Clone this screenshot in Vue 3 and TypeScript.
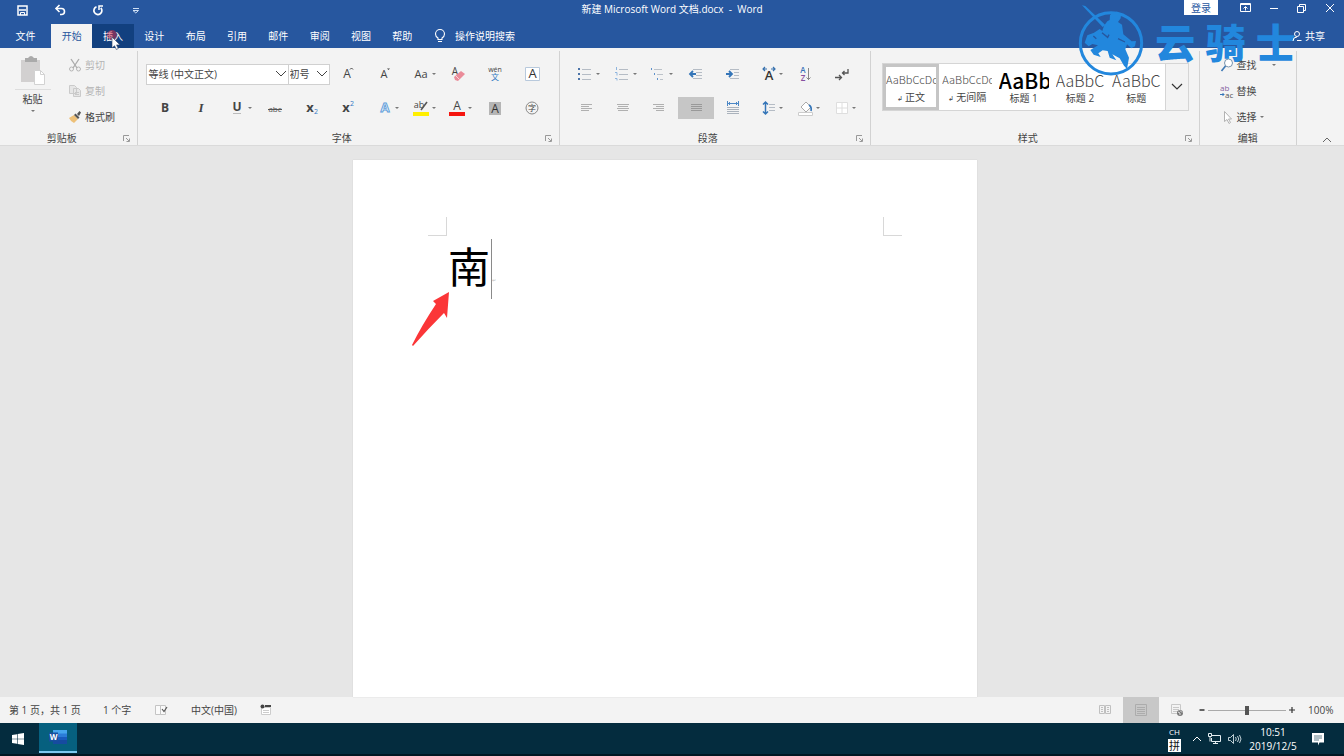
<script setup lang="ts">
import { ref } from 'vue'

interface Tool {
  name: string
  svg: string
  menu?: boolean
  active?: boolean
}

const tabs = ['开始', '插入', '设计', '布局', '引用', '邮件', '审阅', '视图', '帮助']
const activeTab = ref('开始')
const hoverTab = '插入'
const zoom = ref(50)

const lines = (rows: [number, number, number][], color: string) =>
  rows.map(([x1, x2, y]) => `<path d="M${x1} ${y}H${x2}" stroke="${color}"/>`).join('')

const letter = (t: string, x: number, y: number, size: number, fill: string, extra = '') =>
  `<text x="${x}" y="${y}" font-size="${size}" fill="${fill}" text-anchor="middle" ${extra}>${t}</text>`

const quick: Tool[] = [
  { name: '保存', svg: '<path d="M6 6h9v9H6z" fill="#27579f" stroke="#fff" stroke-width="1.500"/><path d="M7 10h7" stroke="#fff" stroke-width="1.500"/><path d="M8.500 15v-2.500h4V15" stroke="#fff" fill="none"/>' },
  { name: '撤消', svg: '<path d="M6.500 8.500h5a3 3 0 0 1 0 6H10" fill="none" stroke="#fff" stroke-width="1.600"/><path d="M9.500 5 6 8.500 9.500 12" fill="none" stroke="#fff" stroke-width="1.600"/>' },
  { name: '重复', svg: '<path d="M8.500 6.800a4 4 0 1 0 4.300 1" fill="none" stroke="#fff" stroke-width="1.700"/><path d="M15 6h-4v4" fill="none" stroke="#fff" stroke-width="1.500"/>' },
  { name: '自定义快速访问工具栏', svg: '<path d="M7 8.500h6" stroke="#cfe0f5"/><path d="M7 10.500h5.500L9.800 13z" fill="none" stroke="#cfe0f5"/>' },
]

const windowButtons: Tool[] = [
  { name: '功能区显示选项', svg: '<path d="M4.500 5.500h10v8h-10z" fill="none" stroke="#fff"/><path d="M5 6.500h9" stroke="#fff"/><path d="M9.500 12.500V9M7.500 10.500l2-2 2 2" fill="none" stroke="#fff"/>' },
  { name: '最小化', svg: '<path d="M6 10.500h8" stroke="#fff"/>' },
  { name: '向下还原', svg: '<path d="M5.500 8.500h6v6h-6z" fill="none" stroke="#fff"/><path d="M7.500 8V6.500h6v6H12" fill="none" stroke="#fff"/>' },
  { name: '关闭', svg: '<path d="m6 6 8 8M14 6l-8 8" stroke="#fff" fill="none"/>' },
]

const fontTop: Tool[] = [
  { name: '增大字号', svg: letter('A', 9, 14, 12, '#444') + '<path d="m12 5.500 1.500-1.500L15 5.500" fill="none" stroke="#444"/>' },
  { name: '减小字号', svg: letter('A', 9, 14, 11, '#444') + '<path d="M12 4.500h3l-1.500 1.500z" fill="#444"/>' },
  { name: '更改大小写', svg: letter('Aa', 9, 14, 11, '#444'), menu: true },
  { name: '清除所有格式', svg: letter('A', 7, 11, 10, '#444') + '<path d="m6 13 7-6 4 3-7 7-3-1z" fill="#ea8b99"/><path d="m8 12 3.500 3.500" stroke="#f9d5da"/>' },
  { name: '拼音指南', svg: letter('wén', 10, 8, 7, '#444') + letter('文', 10, 16, 8, '#2f78c4') },
  { name: '字符边框', svg: '<path d="M3.500 3.500h14v13h-14z" fill="#fff" stroke="#b8c9dc"/>' + letter('A', 10.5, 14, 13, '#333') },
]

const fontBottom: Tool[] = [
  { name: '加粗', svg: letter('B', 10, 14, 12, '#444', 'font-weight="700"') },
  { name: '倾斜', svg: letter('I', 10, 14, 13, '#444', 'font-weight="700" font-style="italic" font-family="Liberation Serif, serif"') },
  { name: '下划线', svg: letter('U', 9, 13, 12, '#444', 'font-weight="700"') + '<path d="M5 15.500h8" stroke="#bbb"/>', menu: true },
  { name: '删除线', svg: letter('abc', 10, 14, 8, '#555') + '<path d="M3 11.500h14" stroke="#555"/>' },
  { name: '下标', svg: letter('x', 8, 14, 13, '#444', 'font-weight="700"') + letter('2', 14, 16, 7, '#2f78c4') },
  { name: '上标', svg: letter('x', 8, 14, 13, '#444', 'font-weight="700"') + letter('2', 14, 8, 7, '#2f78c4') },
  { name: '文本效果和版式', svg: letter('A', 10, 14, 13, '#eef5fc', 'stroke="#5b9bd9" stroke-width=".9" font-weight="700"'), menu: true },
  { name: '突出显示', svg: letter('ab', 7, 10, 9, '#444') + '<path d="m15 4-6 8" stroke="#555" stroke-width="1.600"/><path d="M1 14h16v4H1z" fill="#ffef00"/>', menu: true },
  { name: '字体颜色', svg: letter('A', 9, 12, 12, '#444') + '<path d="M1 14h16v4H1z" fill="#f5150f"/>', menu: true },
  { name: '字符底纹', svg: '<path d="M4 4h12v13H4z" fill="#b5b5b5"/>' + letter('A', 10, 15, 12, '#333') },
  { name: '带圈字符', svg: '<circle cx="10" cy="10" r="6" fill="none" stroke="#888"/>' + letter('字', 10, 13, 8, '#444') },
]

const paraTop: Tool[] = [
  { name: '项目符号', svg: '<path d="M2 4h2v2H2zM2 9h2v2H2zM2 14h2v2H2z" fill="#4b73a8"/>' + lines([[6, 15, 5.5], [6, 15, 10.5], [6, 15, 15.5]], '#b5bcc5'), menu: true },
  { name: '编号', svg: '<path d="M3.500 3v3M2 8.500h2v3M2 14.500h2v2" fill="none" stroke="#8eb5df"/>' + lines([[6, 15, 5.5], [6, 15, 10.5], [6, 15, 15.5]], '#b5bcc5'), menu: true },
  { name: '多级列表', svg: '<path d="M2.500 4v2M5.500 9v2M8.500 14v2" stroke="#5e92cc"/>' + lines([[5, 13, 5.5], [8, 14, 10.5], [11, 14, 15.5]], '#bcc2c9'), menu: true },
  { name: '减少缩进量', svg: lines([[7, 16, 5.5], [10, 16, 8.5], [10, 16, 11.5], [7, 16, 14.5]], '#b5bcc5') + '<path d="M4 10h6M7 7l-3 3 3 3" fill="none" stroke="#3475b8" stroke-width="1.800"/>' },
  { name: '增加缩进量', svg: lines([[7, 16, 5.5], [11, 16, 8.5], [11, 16, 11.5], [7, 16, 14.5]], '#b5bcc5') + '<path d="M3 10h6M6 7l3 3-3 3" fill="none" stroke="#3475b8" stroke-width="1.800"/>' },
  { name: '中文版式', svg: letter('A', 10, 16, 13, '#333', 'font-weight="600"') + '<path d="M4 5h4M6 3 4 5l2 2M12 5h4M14 3l2 2-2 2" fill="none" stroke="#3670ad" stroke-width="1.200"/>', menu: true },
  { name: '排序', svg: letter('A', 7, 9, 8, '#3671b8', 'font-weight="600"') + letter('Z', 7, 17, 8, '#8650a0', 'font-weight="600"') + '<path d="M12.500 4v12M10.500 13.500l2 2 2-2" fill="none" stroke="#888"/>' },
  { name: '显示编辑标记', svg: '<path d="M3 13.500h6M7 11l2.500 2.500L7 16M16 5v4h-5M12.500 7l-2 2 2 2" fill="none" stroke="#555" stroke-width="1.300"/>' },
]

const paraBottom: Tool[] = [
  { name: '左对齐', svg: lines([[5, 16, 6.5], [5, 13, 8.5], [5, 16, 10.5], [5, 13, 12.5]], '#b0b0b0') },
  { name: '居中', svg: lines([[4, 16, 6.5], [5, 15, 8.5], [4, 16, 10.5], [5, 15, 12.5]], '#b0b0b0') },
  { name: '右对齐', svg: lines([[4, 15, 6.5], [7, 15, 8.5], [4, 15, 10.5], [7, 15, 12.5]], '#b0b0b0') },
  { name: '两端对齐', svg: lines([[5, 16, 6.5], [5, 16, 8.5], [5, 16, 10.5], [5, 16, 12.5]], '#999'), active: true },
  { name: '分散对齐', svg: '<path d="M4.500 3v5M15.500 3v5M5 5.500h10M7 4 5.500 5.500 7 7M13 4l1.500 1.500L13 7" fill="none" stroke="#4b87c6"/>' + lines([[4, 16, 9.5], [4, 16, 11.5], [4, 16, 13.5], [4, 16, 15.5]], '#aab2bc') },
  { name: '行和段落间距', svg: '<path d="M6.500 4v12M4 6.500l2.500-2.500L9 6.500M4 13.500 6.500 16 9 13.500" fill="none" stroke="#3475b8" stroke-width="1.500"/>' + lines([[10, 16, 6.5], [10, 16, 9.5], [10, 16, 12.5]], '#b5bcc5'), menu: true },
  { name: '底纹', svg: '<path d="m5 9 5-5 5 5-5 5z" fill="#fff" stroke="#aaa"/><path d="M13 7q3 2 2 6" fill="none" stroke="#3475b8" stroke-width="1.600"/><path d="M2.500 14.500h14v3h-14z" fill="#fff" stroke="#ccc"/>', menu: true },
  { name: '边框', svg: '<path d="M4.500 4.500h11v11h-11z" fill="#fff" stroke="#dedede"/><path d="M10 5v10M5 10h10" stroke="#dedede"/>', menu: true },
]

const styles = [
  { sample: 'AaBbCcDc', name: '正文', kind: 'text', mark: true },
  { sample: 'AaBbCcDc', name: '无间隔', kind: 'text', mark: true },
  { sample: 'AaBb', name: '标题 1', kind: 'h1', mark: false },
  { sample: 'AaBbC', name: '标题 2', kind: 'h2', mark: false },
  { sample: 'AaBbC', name: '标题', kind: 'h2', mark: false },
]

const groups = [
  { key: 'font', label: '字体', tools: [...fontTop, ...fontBottom] },
  { key: 'para', label: '段落', tools: [...paraTop, ...paraBottom] },
]
</script>

<template>
  <div class="word">
    <header class="banner">
      <div class="titlebar">
        <div class="quick">
          <button v-for="q in quick" :key="q.name" :aria-label="q.name">
            <svg width="20" height="20" viewBox="0 0 20 20" v-html="q.svg"></svg>
          </button>
        </div>
        <h1>新建 Microsoft Word 文档.docx&nbsp; -&nbsp; Word</h1>
        <div class="window">
          <button class="login">登录</button>
          <button v-for="w in windowButtons" :key="w.name" class="win" :aria-label="w.name">
            <svg width="20" height="20" viewBox="0 0 20 20" v-html="w.svg"></svg>
          </button>
        </div>
      </div>
      <div class="tabrow">
        <nav class="tabs">
          <button>文件</button>
          <button
            v-for="t in tabs"
            :key="t"
            :class="{ on: t === activeTab, hover: t === hoverTab }"
            @click="activeTab = t"
          >
            {{ t }}
            <svg v-if="t === hoverTab" class="pointer" width="16" height="22" viewBox="0 0 16 22">
              <circle cx="6" cy="6" r="5" fill="#d82b45" opacity=".5" />
              <path d="M6 8v11l2.500-2.300 1.800 3.800 2-1-1.700-3.600H14z" fill="#fff" stroke="#2b3c60" stroke-width=".6" />
            </svg>
          </button>
        </nav>
        <button class="tell">
          <svg width="12" height="16" viewBox="0 0 12 16">
            <path d="M4 11.500V10Q1.500 8.500 1.500 6a4.500 4.500 0 0 1 9 0Q10.500 8.500 8 10v1.500zM4 13.500h4" fill="none" stroke="#fff" stroke-width="1.100" />
          </svg>
          <span>操作说明搜索</span>
        </button>
        <button class="share">
          <svg width="10" height="12" viewBox="0 0 10 12">
            <circle cx="5" cy="4" r="2.500" fill="none" stroke="#fff" />
            <path d="M1 11Q1 7 5 7M5 10.500h4.500" fill="none" stroke="#fff" />
          </svg>
          <span>共享</span>
        </button>
      </div>
    </header>

    <section class="ribbon">
      <div class="group clipboard">
        <div class="body clip">
          <button class="paste">
            <svg width="26" height="32" viewBox="0 0 26 32">
              <path d="M1 5h19v22H1z" fill="#d2d0d0" />
              <path d="M5 3h3q3-4 6 0h3v4H5z" fill="#aaa" />
              <path d="M14.500 15.500h6l4 4v10h-10z" fill="#fff" stroke="#d2d2d2" />
              <path d="M20.500 15.500v4h4" fill="none" stroke="#d2d2d2" />
            </svg>
            <span class="rule"></span>
            <span>粘贴</span>
            <i class="caret"></i>
          </button>
          <div class="stack">
            <button class="dim">
              <svg width="14" height="14" viewBox="0 0 14 14">
                <path d="m3 1 6 9M11 1 5 10" stroke="#aaa" stroke-width="1.300" fill="none" />
                <circle cx="3.500" cy="11" r="2" fill="none" stroke="#b5b5b5" />
                <circle cx="10.500" cy="11" r="2" fill="none" stroke="#b5b5b5" />
              </svg>剪切
            </button>
            <button class="dim">
              <svg width="14" height="14" viewBox="0 0 14 14">
                <path d="M1.500 1.500h5l2 2v6h-7zM5.500 4.500h5l2 2v6h-7z" fill="#e6e6e6" stroke="#cacaca" />
                <path d="M7 8.500h4M7 10.500h4" stroke="#c8c8c8" />
              </svg>复制
            </button>
            <button>
              <svg width="14" height="14" viewBox="0 0 14 14">
                <path d="m1 8 5-3 4 4-4 4q-3-1-5-5z" fill="#edc078" />
                <path d="m6 5 1.500-1.500 4 4L10 9zM9 4l2.500-3 1.500 1.500L11 6z" fill="#555" />
              </svg>格式刷
            </button>
          </div>
        </div>
        <footer>
          <span>剪贴板</span>
          <button class="launch" aria-label="剪贴板选项">
            <svg width="7" height="7" viewBox="0 0 7 7"><path d="M.5 6V.5H6M3 3l3 3M6.500 3.500v3h-3" fill="none" stroke="#999" /></svg>
          </button>
        </footer>
      </div>

      <div v-for="g in groups" :key="g.key" class="group" :class="g.key">
        <div class="body tools">
          <div v-if="g.key === 'font'" class="pick">
            <label class="combo">
              <select aria-label="字体"><option>等线 (中文正文)</option></select>
              <svg width="12" height="8" viewBox="0 0 12 8"><path d="m1 1 5 5 5-5" fill="none" stroke="#444" /></svg>
            </label>
            <label class="combo small">
              <select aria-label="字号"><option>初号</option></select>
              <svg width="12" height="8" viewBox="0 0 12 8"><path d="m1 1 5 5 5-5" fill="none" stroke="#444" /></svg>
            </label>
          </div>
          <button
            v-for="t in g.tools"
            :key="t.name"
            class="tool"
            :class="{ active: t.active }"
            :aria-label="t.name"
          >
            <svg width="20" height="20" viewBox="0 0 20 20" v-html="t.svg"></svg>
            <i v-if="t.menu" class="caret"></i>
          </button>
        </div>
        <footer>
          <span>{{ g.label }}</span>
          <button class="launch" aria-label="更多选项">
            <svg width="7" height="7" viewBox="0 0 7 7"><path d="M.5 6V.5H6M3 3l3 3M6.500 3.500v3h-3" fill="none" stroke="#999" /></svg>
          </button>
        </footer>
      </div>

      <div class="group style">
        <div class="body">
          <div class="gallery">
            <button v-for="(s, i) in styles" :key="s.name" class="card" :class="{ chosen: i === 0 }">
              <span class="sample" :class="s.kind">{{ s.sample }}</span>
              <span class="name"><small v-if="s.mark">↲</small>{{ s.name }}</span>
            </button>
            <button class="more" aria-label="其他样式">
              <svg width="12" height="8" viewBox="0 0 12 8"><path d="m1 1 5 5 5-5" fill="none" stroke="#333" stroke-width="1.200" /></svg>
            </button>
          </div>
        </div>
        <footer>
          <span>样式</span>
          <button class="launch" aria-label="样式选项">
            <svg width="7" height="7" viewBox="0 0 7 7"><path d="M.5 6V.5H6M3 3l3 3M6.500 3.500v3h-3" fill="none" stroke="#999" /></svg>
          </button>
        </footer>
      </div>

      <div class="group edit">
        <div class="body stack">
          <button>
            <svg width="14" height="14" viewBox="0 0 14 14">
              <circle cx="8.500" cy="5" r="4" fill="#fff" stroke="#7994ad" />
              <path d="m5.500 8-4 5" stroke="#3d78b4" stroke-width="1.600" />
            </svg>查找<i class="caret far"></i>
          </button>
          <button>
            <svg width="14" height="14" viewBox="0 0 14 14">
              <text x="0" y="7" font-size="8" fill="#8360a0">ab</text>
              <text x="5" y="14" font-size="8" fill="#555">ac</text>
              <path d="M0 10.500h4M2.500 9 4 10.500 2.500 12" fill="none" stroke="#3475b8" />
            </svg>替换
          </button>
          <button>
            <svg width="14" height="14" viewBox="0 0 14 14">
              <path d="M4.500 1.500v10l2.500-2 2 4 1.500-1-2-3.500h3z" fill="#fff" stroke="#aaa" stroke-width=".9" />
            </svg>选择<i class="caret"></i>
          </button>
        </div>
        <footer><span>编辑</span></footer>
      </div>

      <div class="fold">
        <button aria-label="折叠功能区">
          <svg width="10" height="6" viewBox="0 0 10 6"><path d="m1 5 4-4 4 4" fill="none" stroke="#666" /></svg>
        </button>
      </div>
    </section>

    <main class="desk">
      <article class="page">
        <div class="corners"><i class="corner"></i><i class="corner end"></i></div>
        <p class="line">南<span class="cursor"></span><small>↵</small></p>
        <svg class="arrow" width="40" height="56" viewBox="0 0 40 56">
          <path d="M38 1 22 10l3 3Q11 34 1 54l1 1Q17 38 33 22l3 5z" fill="#fb3638" />
        </svg>
      </article>
    </main>

    <footer class="status">
      <span class="pages">第 1 页，共 1 页</span>
      <span class="words">1 个字</span>
      <button aria-label="校对" class="proof">
        <svg width="14" height="12" viewBox="0 0 14 12">
          <path d="M1.500 1.500h5v9h-5zM6.500 1.500h5v9h-5z" fill="#fafafa" stroke="#c4c4c4" />
          <path d="m8 5 2 2.500L13 3" fill="none" stroke="#555" stroke-width="1.200" />
        </svg>
      </button>
      <span class="lang">中文(中国)</span>
      <button aria-label="宏录制">
        <svg width="12" height="12" viewBox="0 0 12 12">
          <path d="M1.500 3.500h9v7h-9z" fill="#fff" stroke="#ccc" />
          <path d="M3 6.500h6M3 8.500h6" stroke="#ccc" />
          <circle cx="2.500" cy="2.500" r="2" fill="#444" />
          <path d="M5 1h6v2H5z" fill="#444" />
        </svg>
      </button>
      <div class="views">
        <button aria-label="阅读视图">
          <svg width="12" height="12" viewBox="0 0 12 12"><path d="M.5 1.500h5v8h-5zM6.500 1.500h5v8h-5zM2 3.500h2M2 5.500h2M2 7.500h2M8 3.500h2M8 5.500h2M8 7.500h2" fill="none" stroke="#c0c0c0" /></svg>
        </button>
        <button class="on" aria-label="页面视图">
          <svg width="12" height="12" viewBox="0 0 12 12"><path d="M.5.5h11v11H.5zM2 3.500h8M2 5.500h8M2 7.500h8M2 9.500h8" fill="none" stroke="#acacac" /></svg>
        </button>
        <button aria-label="Web 版式视图">
          <svg width="12" height="12" viewBox="0 0 12 12">
            <path d="M.5.5h9v9h-9zM2 3.500h6M2 5.500h6M2 7.500h6" fill="none" stroke="#c8c8c8" />
            <circle cx="9" cy="9" r="3" fill="#777" /><path d="m7 8 2 1v2M9 6.500l2 2" stroke="#fff" fill="none" stroke-width=".8" />
          </svg>
        </button>
      </div>
      <div class="zoom">
        <button aria-label="缩小"><svg width="6" height="6" viewBox="0 0 6 6"><path d="M.5 3h5" stroke="#333" stroke-width="1.500" /></svg></button>
        <input v-model="zoom" type="range" min="0" max="100" aria-label="缩放" />
        <button aria-label="放大"><svg width="6" height="6" viewBox="0 0 6 6"><path d="M0 3h6M3 0v6" stroke="#333" stroke-width="1.200" /></svg></button>
      </div>
      <span class="percent">100%</span>
    </footer>

    <div class="taskbar">
      <button class="start" aria-label="开始菜单">
        <svg width="12" height="12" viewBox="0 0 12 12"><path d="m0 2 5-.8v4.500H0zM5.600 1.100 12 0v5.700H5.600zM0 6.300h5v4.500L0 10zM5.600 6.300H12V12l-6.400-1.100z" fill="#fff" /></svg>
      </button>
      <button class="app" aria-label="Word">
        <svg width="18" height="16" viewBox="0 0 18 16">
          <path d="M4 1h14v4H4z" fill="#45a5ee" /><path d="M4 4.500h14v4H4z" fill="#2b7cd8" />
          <path d="M4 8h14v3.500H4z" fill="#195bbd" /><path d="M4 11h14v4H4z" fill="#164ba0" />
          <path d="M0 3.500h9v9H0z" fill="#174f9f" />
          <text x="4.500" y="11" font-size="8" font-weight="700" fill="#fff" text-anchor="middle">W</text>
        </svg>
      </button>
      <div class="tray">
        <span class="ime"><span>CH</span><b>拼</b></span>
        <button aria-label="显示隐藏的图标"><svg width="10" height="6" viewBox="0 0 10 6"><path d="m1 5 4-4 4 4" fill="none" stroke="#fff" /></svg></button>
        <button aria-label="网络">
          <svg width="14" height="12" viewBox="0 0 14 12"><path d="M4 2.500h8.500v6h-9V5M5 10.500h5M7.500 8.500v2M.5.500h3v3h-3zM2 3.500v5" fill="none" stroke="#e5eef2" /></svg>
        </button>
        <button aria-label="音量">
          <svg width="14" height="12" viewBox="0 0 14 12"><path d="M.5 4.500h2l3-3v9l-3-3h-2zM7.500 4q1.500 2 0 4M9.500 3q2.500 3 0 6M11.500 2q3 4 0 8" fill="none" stroke="#d5e2e7" stroke-width=".9" /></svg>
        </button>
        <time><span>10:51</span><span>2019/12/5</span></time>
        <button class="note" aria-label="通知">
          <svg width="14" height="14" viewBox="0 0 14 14"><path d="M1 1h12v9.500H8.500L7 13.500V10.500H1z" fill="#fff" /><path d="M3 4h8M3 6h8M3 8h5" stroke="#527582" stroke-width=".9" /></svg>
        </button>
      </div>
    </div>

    <div class="brand">
      <svg width="74" height="80" viewBox="50 0 222 240">
        <circle cx="155" cy="130" r="92" fill="none" stroke="#2287dd" stroke-width="9" />
        <path d="m68 16 10 2 60 57-8 6z" fill="#2287dd" />
        <path d="M76 128 84 106 104 98 121 87 129 93 134 77 144 64 151 60 152 46 157 40 171 35 185 43 184 55 176 66 188 74 192 103 217 124 230 123 227 139 216 145 203 133 198 148 209 173 203 207 194 197 181 175 159 163 171 181 151 173 145 153 130 151 117 160 124 171 103 164 93 150 116 136 99 132 88 139z" fill="#2287dd" />
        <path d="m128 98 17 14 4-8M176 116l21 10M102 108l9 8" fill="none" stroke="#27579f" stroke-width="4" />
      </svg>
      <span>云</span><span>骑</span><span>士</span>
    </div>
  </div>
</template>

<style>
body {
  margin: 0;
}
</style>

<style scoped>
.word {
  position: relative;
  display: flex;
  flex-direction: column;
  min-height: 100vh;
  overflow: hidden;
  background: #e6e6e6;
  color: #444;
  font: 10px/14px "Open Sans", "Noto Sans CJK SC", sans-serif;
}
button {
  display: flex;
  align-items: center;
  justify-content: center;
  padding: 0;
  border: 0;
  background: none;
  color: inherit;
  font: inherit;
  white-space: nowrap;
}
svg {
  flex: none;
  display: block;
}
.banner {
  background: #27579f;
  color: #fff;
}
.titlebar {
  display: grid;
  grid-template-columns: 1fr auto 1fr;
  height: 24px;
}
.titlebar h1 {
  margin: 0;
  font-size: 10px;
  font-weight: 400;
  line-height: 18px;
  white-space: pre;
}
.quick {
  display: flex;
  padding-left: 3px;
}
.quick button {
  width: 38px;
  height: 20px;
}
.window {
  display: flex;
  justify-content: flex-end;
  align-items: flex-start;
}
.login {
  width: 34px;
  height: 15px;
  margin-right: 14px;
  background: #fff;
  color: #27579f;
}
.win {
  width: 28px;
  height: 15px;
}
.tabrow {
  display: flex;
  height: 24px;
}
.tabs {
  display: grid;
  grid-template-columns: 51px repeat(9, 1fr);
  width: 423px;
}
.tabs button {
  position: relative;
}
.tabs .on {
  background: #f3f3f3;
  color: #27579f;
}
.tabs .hover {
  background: #12407f;
}
.pointer {
  position: absolute;
  left: 14px;
  top: 5px;
}
.tell {
  gap: 9px;
  margin-left: 11px;
}
.share {
  position: relative;
  z-index: 2;
  gap: 3px;
  margin: 0 19px 0 auto;
}
.ribbon {
  display: flex;
  height: 98px;
  background: #f3f3f3;
  border-bottom: 1px solid #dadada;
  box-sizing: border-box;
}
.group {
  display: flex;
  flex-direction: column;
  box-sizing: border-box;
  min-width: 0;
  margin: 3px 0 0;
  border-right: 1px solid #d2d2d2;
}
.group footer {
  display: flex;
  align-items: center;
  height: 14px;
}
.group footer > span {
  flex: 1;
  text-align: center;
}
.launch {
  width: 14px;
  justify-content: flex-start;
}
.body {
  flex: 1;
}
.clipboard {
  flex: 138 1 0;
}
.font {
  flex: 422 1 0;
}
.para {
  flex: 311 1 0;
}
.style {
  flex: 329 1 0;
}
.edit {
  flex: 97 1 0;
}
.fold {
  flex: 47 1 0;
  display: flex;
  align-items: flex-end;
  justify-content: flex-end;
}
.fold button {
  margin: 0 12px 2px 0;
}
.clip {
  display: flex;
  gap: 19px;
  padding-left: 16px;
}
.paste {
  flex-direction: column;
  justify-content: flex-start;
  width: 33px;
  padding-top: 4px;
}
.rule {
  width: 36px;
  height: 1px;
  margin: 2px 0;
  background: #ddd;
}
.caret {
  width: 0;
  height: 0;
  border: 2px solid transparent;
  border-top-color: #777;
  border-bottom: 0;
}
.paste .caret {
  margin-top: 4px;
}
.stack {
  display: flex;
  flex-direction: column;
  align-items: flex-start;
  padding-top: 1px;
}
.stack button {
  height: 26px;
  gap: 3px;
}
.dim {
  color: #b3b3b3;
}
.edit .stack {
  padding-left: 20px;
}
.caret.far {
  margin-left: 12px;
}
.tools {
  display: grid;
  grid-template-rows: 34px 34px;
  padding: 6px 9px 0 8px;
}
.font .tools {
  grid-template-columns: repeat(11, 1fr);
}
.para .tools {
  grid-template-columns: repeat(8, 1fr);
}
.pick {
  grid-column: span 5;
  display: flex;
  align-items: center;
}
.combo {
  display: grid;
  flex: 141 1 0;
  align-items: center;
}
.combo.small {
  flex: 42 1 0;
  margin-left: -1px;
}
.combo select,
.combo svg {
  grid-area: 1 / 1;
}
.combo svg {
  justify-self: end;
  margin-right: 2px;
  pointer-events: none;
}
.combo select {
  appearance: none;
  width: 100%;
  height: 21px;
  padding: 0 1px;
  border: 1px solid #d0d0d0;
  border-radius: 0;
  background: #fff;
  color: #444;
  font: inherit;
}
.tool {
  display: grid;
  grid-template-columns: 1fr 20px 1fr;
  align-items: center;
}
.tool svg {
  grid-column: 2;
}
.tool.active {
  height: 22px;
  align-self: center;
  background: #c6c6c6;
}
.gallery {
  display: grid;
  grid-template-columns: repeat(5, 1fr) 23px;
  height: 48px;
  margin: 12px 10px 0 11px;
  box-sizing: border-box;
  border: 1px solid #d5d5d5;
  background: #fff;
}
.card {
  flex-direction: column;
  min-width: 0;
  padding: 0 3px;
}
.card.chosen {
  padding: 0;
  border: 3px solid #c5c5c5;
}
.sample {
  height: 22px;
  max-width: 50px;
  overflow: hidden;
  font-family: "Noto Sans CJK SC", sans-serif;
  font-weight: 300;
  line-height: 22px;
}
.sample.text {
  font-size: 11px;
}
.sample.h1 {
  color: #000;
  font-size: 21px;
  font-weight: 500;
}
.sample.h2 {
  font-size: 16px;
}
.name {
  line-height: 14px;
}
.name small {
  margin-right: 2px;
  font-size: 7px;
}
.more {
  border-left: 1px solid #d5d5d5;
  background: #f3f3f3;
}
.desk {
  flex: 1;
  display: flex;
  justify-content: center;
  padding: 14px 14px 0 0;
}
.page {
  position: relative;
  width: 624px;
  box-sizing: border-box;
  padding: 57px 75px 0;
  background: #fff;
  box-shadow: 0 0 1px #c4c4c4;
}
.corners {
  display: flex;
  justify-content: space-between;
}
.corner {
  width: 18px;
  height: 18px;
  border: solid #d8d8d8;
  border-width: 0 1px 1px 0;
}
.corner.end {
  border-width: 0 0 1px 1px;
}
.line {
  display: flex;
  align-items: flex-start;
  margin: 3px 0 0 20px;
  color: #000;
  font-size: 42px;
  line-height: 52px;
  font-family: "Noto Sans CJK SC", sans-serif;
}
.line small {
  margin-top: 37px;
  color: #bbb;
  font-size: 5px;
  line-height: 8px;
}
.cursor {
  width: 1px;
  height: 60px;
  margin-left: 1px;
  background: #8a8a8a;
}
.arrow {
  position: absolute;
  left: 58px;
  top: 131px;
}
.status {
  display: flex;
  align-items: center;
  height: 26px;
  padding-left: 9px;
  background: #f3f3f3;
  white-space: nowrap;
}
.pages {
  width: 94px;
}
.words {
  width: 51px;
}
.lang {
  width: 69px;
}
.proof {
  margin-right: 23px;
}
.views {
  display: flex;
  align-self: stretch;
  margin-left: auto;
}
.views button {
  width: 36px;
}
.views .on {
  background: #c8c8c8;
}
.zoom {
  display: flex;
  align-items: center;
  gap: 3px;
  margin-left: 4px;
}
.zoom input {
  appearance: none;
  width: 78px;
  height: 12px;
  margin: 0;
  background: linear-gradient(#aaa, #aaa) center / 100% 1px no-repeat;
}
.zoom input::-webkit-slider-thumb {
  appearance: none;
  width: 4px;
  height: 9px;
  background: #555;
}
.percent {
  width: 36px;
  padding-left: 13px;
}
.taskbar {
  display: flex;
  height: 33px;
  box-sizing: border-box;
  border-bottom: 2px solid #011722;
  background: #042c3e;
  color: #fff;
}
.start {
  width: 39px;
  padding-right: 3px;
}
.app {
  width: 38px;
  box-sizing: border-box;
  margin-bottom: 1px;
  border-bottom: 2px solid #7cc9f0;
  background: #06607f;
}
.tray {
  display: flex;
  align-items: center;
  gap: 6px;
  margin-left: auto;
  padding-right: 19px;
}
.ime {
  display: flex;
  flex-direction: column;
  align-items: center;
  margin-right: 5px;
  font-size: 8px;
  line-height: 11px;
}
.ime b {
  width: 13px;
  height: 13px;
  margin-top: 2px;
  background: #fff;
  color: #111;
  font-size: 11px;
  font-weight: 400;
  line-height: 13px;
  text-align: center;
}
.tray time {
  display: flex;
  flex-direction: column;
  align-items: center;
  width: 50px;
}
.note {
  margin-left: 7px;
}
.brand {
  position: absolute;
  top: 0;
  right: 43px;
  display: flex;
  width: 225px;
  color: #2287dd;
  font: 900 40px/82px "Noto Sans CJK SC", sans-serif;
  pointer-events: none;
}
.brand span {
  flex: 1;
  text-align: center;
}
</style>
